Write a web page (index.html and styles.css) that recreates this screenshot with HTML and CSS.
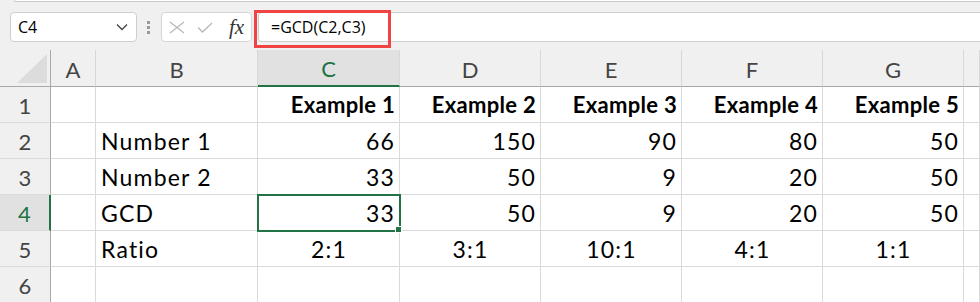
FILE: index.html
```html
<!DOCTYPE html>
<html lang="en">
<head>
    <meta charset="UTF-8">
    <title>GCD - Excel</title>
    <link rel="stylesheet" href="styles.css">
</head>
<body>
    <div class="top-strip"></div>

    <div class="formula-bar">
        <div class="name-box">
            <span>C4</span>
            <svg class="chevron" width="12" height="8" viewBox="0 0 12 8">
                <path d="M1 1.5 L6 6.5 L11 1.5" fill="none" stroke="#444" stroke-width="1.3"/>
            </svg>
        </div>
        <div class="grip"><i></i><i></i><i></i></div>
        <div class="fn-box">
            <svg width="16" height="13" viewBox="0 0 16 13">
                <path d="M1 1 L15 12 M15 1 L1 12" stroke="#b8b8b8" stroke-width="1.3"/>
            </svg>
            <svg width="16" height="11" viewBox="0 0 16 11">
                <path d="M1 5.5 L5.5 10 L15 1" fill="none" stroke="#b8b8b8" stroke-width="1.3"/>
            </svg>
            <span class="fx">fx</span>
        </div>
        <div class="formula-input">=GCD(C2,C3)</div>
        <div class="highlight"></div>
    </div>

    <div class="sheet">
        <!-- header row -->
        <div class="corner">
            <svg width="30" height="29" viewBox="0 0 30 29"><path d="M0 29 L30 0 L30 29 Z" fill="#dcdcdc"/></svg>
        </div>
        <div class="col-head">A</div>
        <div class="col-head">B</div>
        <div class="col-head selected">C</div>
        <div class="col-head">D</div>
        <div class="col-head">E</div>
        <div class="col-head">F</div>
        <div class="col-head">G</div>
        <div class="col-head"></div>

        <!-- row 1 -->
        <div class="row-head">1</div>
        <div class="cell"></div>
        <div class="cell"></div>
        <div class="cell num bold">Example 1</div>
        <div class="cell num bold">Example 2</div>
        <div class="cell num bold">Example 3</div>
        <div class="cell num bold">Example 4</div>
        <div class="cell num bold">Example 5</div>
        <div class="cell"></div>

        <!-- row 2 -->
        <div class="row-head">2</div>
        <div class="cell"></div>
        <div class="cell">Number 1</div>
        <div class="cell num">66</div>
        <div class="cell num">150</div>
        <div class="cell num">90</div>
        <div class="cell num">80</div>
        <div class="cell num">50</div>
        <div class="cell"></div>

        <!-- row 3 -->
        <div class="row-head">3</div>
        <div class="cell"></div>
        <div class="cell">Number 2</div>
        <div class="cell num">33</div>
        <div class="cell num">50</div>
        <div class="cell num">9</div>
        <div class="cell num">20</div>
        <div class="cell num">50</div>
        <div class="cell"></div>

        <!-- row 4 -->
        <div class="row-head selected">4</div>
        <div class="cell"></div>
        <div class="cell">GCD</div>
        <div class="cell num active">33</div>
        <div class="cell num">50</div>
        <div class="cell num">9</div>
        <div class="cell num">20</div>
        <div class="cell num">50</div>
        <div class="cell"></div>

        <!-- row 5 -->
        <div class="row-head">5</div>
        <div class="cell"></div>
        <div class="cell">Ratio</div>
        <div class="cell center">2:1</div>
        <div class="cell center">3:1</div>
        <div class="cell center">10:1</div>
        <div class="cell center">4:1</div>
        <div class="cell center">1:1</div>
        <div class="cell"></div>

        <!-- row 6 -->
        <div class="row-head">6</div>
        <div class="cell"></div>
        <div class="cell"></div>
        <div class="cell"></div>
        <div class="cell"></div>
        <div class="cell"></div>
        <div class="cell"></div>
        <div class="cell"></div>
        <div class="cell"></div>
    </div>
</body>
</html>
```

FILE: styles.css
```css
* {
    box-sizing: border-box;
}

body {
    margin: 0;
    background-color: #f0f0f0;
    font-family: Lato, "Liberation Sans", sans-serif;
    overflow: hidden;
}

.top-strip {
    height: 2px;
    margin-left: 14px;
    background-color: #fff;
    border: 1px solid #c8c8c8;
    border-top: none;
    border-right: none;
    border-radius: 0 0 0 4px;
}

.formula-bar {
    position: relative;
    display: flex;
    align-items: center;
    height: 48px;
    padding: 10px 0 8px 10px;
}

.name-box {
    display: flex;
    align-items: center;
    justify-content: space-between;
    width: 127px;
    height: 30px;
    padding: 0 8px 0 7px;
    background-color: #fff;
    border: 1px solid #cfcfcf;
    border-radius: 4px;
    font-family: "Open Sans", sans-serif;
    font-size: 16px;
    color: #000;
}

.grip {
    display: flex;
    flex-direction: column;
    gap: 2px;
    margin: 0 11px 0 10px;
}

.grip i {
    display: block;
    width: 3px;
    height: 3px;
    background-color: #9a9a9a;
}

.fn-box {
    display: flex;
    align-items: center;
    width: 91px;
    height: 30px;
    padding-left: 7px;
    background-color: #fff;
    border: 1px solid #d6d6d6;
    border-radius: 4px;
}

.fn-box svg {
    margin-right: 12px;
}

.fn-box svg + svg {
    margin-right: 16px;
}

.fx {
    font-family: "Liberation Serif", serif;
    font-style: italic;
    font-size: 21px;
    line-height: 1;
    color: #333;
}

.formula-input {
    flex: 1;
    height: 30px;
    margin-left: 6px;
    padding-left: 12px;
    line-height: 28px;
    background-color: #fff;
    border: 1px solid #cfcfcf;
    border-right: none;
    border-radius: 4px 0 0 4px;
    font-family: "Open Sans", sans-serif;
    font-size: 16px;
    color: #000;
}

/* red annotation box round the formula */
.highlight {
    position: absolute;
    left: 254px;
    top: 8px;
    width: 137px;
    height: 38px;
    border: 3px solid #f04343;
}

.sheet {
    display: grid;
    grid-template-columns: 51px 45px 162px 142px 141px 141px 141px 141px 1fr;
    grid-template-rows: 37px repeat(6, 36px);
    font-size: 22px;
}

.corner {
    display: flex;
    align-items: flex-end;
    justify-content: flex-end;
    padding: 0 3px 3px 0;
    border-right: 1px solid #a8a8a8;
    border-bottom: 1px solid #a8a8a8;
}

.col-head {
    display: flex;
    align-items: center;
    justify-content: center;
    padding-top: 2px;
    color: #444;
    border-right: 1px solid #d8d8d8;
    border-bottom: 1px solid #a8a8a8;
}

.col-head.selected {
    background-color: #e1e1e1;
    color: #217346;
    border-bottom: 2px solid #217346;
}

.row-head {
    display: flex;
    align-items: flex-end;
    justify-content: center;
    padding-bottom: 3px;
    color: #444;
    border-right: 1px solid #a8a8a8;
    border-bottom: 1px solid #dadada;
}

.row-head.selected {
    background-color: #e1e1e1;
    color: #217346;
    border-right: 2px solid #217346;
}

.cell {
    display: flex;
    align-items: flex-end;
    padding: 0 4px 3px 5px;
    background-color: #fff;
    color: #000;
    font-size: 23px;
    white-space: nowrap;
    letter-spacing: 1.2px;
    border-right: 1px solid #dadada;
    border-bottom: 1px solid #dadada;
}

.cell.num {
    justify-content: flex-end;
}

.cell.center {
    justify-content: center;
}

.cell.bold {
    font-size: 22px;
    font-weight: bold;
    letter-spacing: 0.3px;
    padding-bottom: 4px;
}

.cell.active {
    position: relative;
    outline: 2px solid #217346;
    outline-offset: -1px;
}

.cell.active::after {
    content: "";
    position: absolute;
    right: -3px;
    bottom: -3px;
    width: 5px;
    height: 5px;
    background-color: #217346;
    border: 1px solid #fff;
}
```
